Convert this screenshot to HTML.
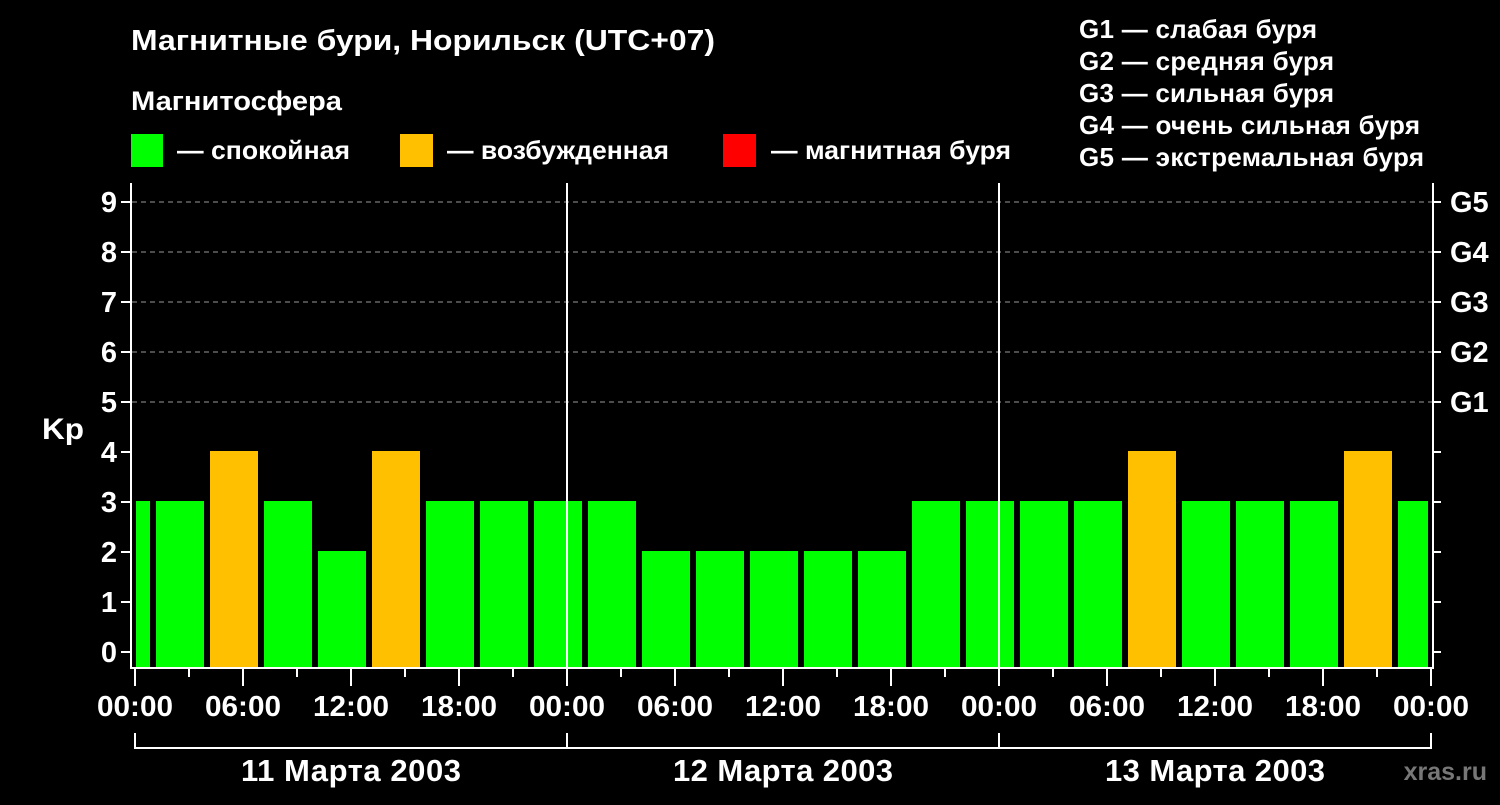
<!DOCTYPE html><html><head><style>body{margin:0;background:#000;width:1500px;height:800px;overflow:hidden}svg text{font-family:"Liberation Sans","Noto Sans CJK SC",sans-serif;font-weight:bold;fill:#fff}</style></head><body>
<svg width="1500" height="800" xmlns="http://www.w3.org/2000/svg">
<rect width="1500" height="800" fill="#000"/>
<text x="131" y="50" font-size="29" textLength="584" lengthAdjust="spacingAndGlyphs">Магнитные бури, Норильск (UTC+07)</text>
<text x="131" y="110" font-size="27" textLength="211" lengthAdjust="spacingAndGlyphs">Магнитосфера</text>
<rect x="131" y="134" width="32" height="33" fill="#00ff00"/><text x="177" y="159" font-size="26" textLength="173" lengthAdjust="spacingAndGlyphs">— спокойная</text>
<rect x="400" y="134" width="33" height="33" fill="#ffc000"/><text x="447" y="159" font-size="26" textLength="222" lengthAdjust="spacingAndGlyphs">— возбужденная</text>
<rect x="723" y="134" width="33" height="33" fill="#ff0000"/><text x="771" y="159" font-size="26" textLength="240" lengthAdjust="spacingAndGlyphs">— магнитная буря</text>
<g font-size="26" lengthAdjust="spacingAndGlyphs"><text x="1079" y="38" textLength="238">G1 — слабая буря</text><text x="1079" y="70" textLength="255">G2 — средняя буря</text><text x="1079" y="102" textLength="255">G3 — сильная буря</text><text x="1079" y="134" textLength="341">G4 — очень сильная буря</text><text x="1079" y="166" textLength="345">G5 — экстремальная буря</text></g>
<g stroke="#999" stroke-dasharray="5,4" stroke-width="1"><line x1="132" x2="1433" y1="202" y2="202"/><line x1="132" x2="1433" y1="252" y2="252"/><line x1="132" x2="1433" y1="302" y2="302"/><line x1="132" x2="1433" y1="352" y2="352"/><line x1="132" x2="1433" y1="402" y2="402"/></g>
<g id="bars"></g>
<g stroke="#fff" stroke-width="2" fill="none">
<line x1="131" y1="183" x2="131" y2="669"/><line x1="1433" y1="183" x2="1433" y2="669"/><line x1="130" y1="668" x2="1434" y2="668"/>
<line x1="567" y1="183" x2="567" y2="668"/><line x1="999" y1="183" x2="999" y2="668"/>
<path d="M135 733V748H1431V733M567 733V748M999 733V748"/>
</g>
<g id="ticks" stroke="#fff" stroke-width="2"></g>
<g font-size="29" text-anchor="end"><text x="117" y="662">0</text><text x="117" y="612">1</text><text x="117" y="562">2</text><text x="117" y="512">3</text><text x="117" y="462">4</text><text x="117" y="412">5</text><text x="117" y="362">6</text><text x="117" y="312">7</text><text x="117" y="262">8</text><text x="117" y="212">9</text></g>
<text x="42" y="439" font-size="30" textLength="42" lengthAdjust="spacingAndGlyphs">Kp</text>
<g font-size="29"><text x="1450" y="412">G1</text><text x="1450" y="362">G2</text><text x="1450" y="312">G3</text><text x="1450" y="262">G4</text><text x="1450" y="212">G5</text></g>
<g font-size="29" text-anchor="middle" id="xl"></g>
<g font-size="31" text-anchor="middle" lengthAdjust="spacingAndGlyphs"><text x="351" y="781" textLength="220">11 Марта 2003</text><text x="783" y="781" textLength="220">12 Марта 2003</text><text x="1215" y="781" textLength="220">13 Марта 2003</text></g>
<text x="1487" y="780" font-size="25" text-anchor="end" style="fill:#777">xras.ru</text>
</svg>
<script>
var ns="http://www.w3.org/2000/svg",b=document.getElementById("bars");
function r(x,w,v){var e=document.createElementNS(ns,"rect");e.setAttribute("x",x);e.setAttribute("width",w);e.setAttribute("y",652-50*v-1);e.setAttribute("height",668-(652-50*v-1));e.setAttribute("fill",v>=4?"#ffc000":"#00ff00");b.appendChild(e);}
r(136,14,3);var vals=[3,4,3,2,4,3,3,3,3,2,2,2,2,2,3,3,3,3,4,3,3,3,4];
vals.forEach(function(v,i){r(156+54*i,48,v)});r(1398,30,3);
var t=document.getElementById("ticks");
function l(x1,y1,x2,y2){var e=document.createElementNS(ns,"line");e.setAttribute("x1",x1);e.setAttribute("y1",y1);e.setAttribute("x2",x2);e.setAttribute("y2",y2);t.appendChild(e);}
for(var k=0;k<10;k++){var y=652-50*k;l(121,y,131,y);l(1433,y,1441,y);}
var xl=document.getElementById("xl"),labs=["00:00","06:00","12:00","18:00"];
for(var i=0;i<=24;i++){var x=135+54*i;l(x,669,x,i%2?677:686);}
for(var i=0;i<=12;i++){var x=135+108*i;var e=document.createElementNS(ns,"text");e.setAttribute("x",x);e.setAttribute("y",716);e.setAttribute("textLength",76);e.setAttribute("lengthAdjust","spacingAndGlyphs");e.textContent=labs[i%4];xl.appendChild(e);}
</script>
</body></html>
